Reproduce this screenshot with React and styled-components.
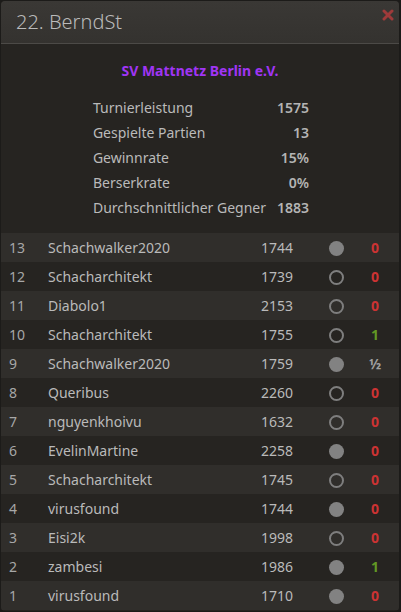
import React from "react";
import styled, { createGlobalStyle } from "styled-components";

const GlobalStyle = createGlobalStyle`
  html, body { margin: 0; padding: 0; background: #1c1b19; }
  body { font-family: "Noto Sans", "Open Sans", sans-serif; color: #bababa; }
  * { box-sizing: border-box; }
`;

const Panel = styled.div`
  margin: 1px 2px 1px 1px;
  width: 398px;
  height: 610px;
  background: #262421;
  border-radius: 4px;
  overflow: hidden;
  display: flex;
  flex-direction: column;
`;

const Header = styled.div`
  height: 43px;
  flex: none;
  background: linear-gradient(to bottom, #3a3835, #34322f);
  border-bottom: 1px solid #4c4a47;
  display: flex;
  align-items: center;
  justify-content: space-between;
  padding: 0 5px 2px 15px;
`;

const Title = styled.h2`
  margin: 0;
  font-size: 20px;
  font-weight: 300;
  color: #bababa;
  letter-spacing: 0;
`;

const Close = styled.button`
  border: 0;
  background: none;
  padding: 0;
  margin-top: -12px;
  width: 12px;
  height: 12px;
  display: flex;
  cursor: pointer;
`;

const Club = styled.div`
  text-align: center;
  font-size: 14px;
  font-weight: 700;
  color: #a035f5;
  line-height: 20px;
  margin-top: 17px;
`;

const Stats = styled.table`
  margin: 14px auto 13px;
  border-collapse: collapse;
  font-size: 14px;
  position: relative;
  left: 1px;
`;

const StatLabel = styled.th`
  text-align: left;
  font-weight: 400;
  height: 25px;
  padding: 0 11px 0 0;
  color: #bababa;
`;

const StatValue = styled.td`
  text-align: right;
  font-weight: 600;
  padding: 0;
  color: #b4b4b4;
`;

const Games = styled.table`
  width: 100%;
  border-collapse: collapse;
  font-size: 14px;
`;

const Row = styled.tr`
  height: 29px;
  background: ${(p) => (p.$odd ? "#302e2b" : "#262421")};
`;

const Num = styled.td`
  width: 47px;
  padding: 0 0 0 8px;
  color: #a7a7a7;
`;

const Name = styled.td`
  padding: 0;
  color: #bababa;
`;

const Rating = styled.td`
  width: 80px;
  padding: 0;
  text-align: right;
  color: #bababa;
`;

const ColorCell = styled.td`
  width: 70px;
  padding: 0;
`;

const Dot = styled.span`
  display: block;
  margin: 1px 0 0 36px;
  width: 15px;
  height: 15px;
  border-radius: 50%;
  background: ${(p) => (p.$white ? "transparent" : "#828282")};
  border: ${(p) => (p.$white ? "2px solid #7e7e7e" : "none")};
`;

const Result = styled.td`
  width: 36px;
  padding: 0 12px 0 0;
  text-align: center;
  font-weight: 700;
  color: ${(p) =>
    p.$r === "1" ? "#629924" : p.$r === "0" ? "#cc3333" : "#a0a0a0"};
`;

const stats = [
  ["Turnierleistung", "1575"],
  ["Gespielte Partien", "13"],
  ["Gewinnrate", "15%"],
  ["Berserkrate", "0%"],
  ["Durchschnittlicher Gegner", "1883"],
];

const games = [
  [13, "Schachwalker2020", 1744, "b", "0"],
  [12, "Schacharchitekt", 1739, "w", "0"],
  [11, "Diabolo1", 2153, "w", "0"],
  [10, "Schacharchitekt", 1755, "w", "1"],
  [9, "Schachwalker2020", 1759, "b", "½"],
  [8, "Queribus", 2260, "w", "0"],
  [7, "nguyenkhoivu", 1632, "w", "0"],
  [6, "EvelinMartine", 2258, "b", "0"],
  [5, "Schacharchitekt", 1745, "w", "0"],
  [4, "virusfound", 1744, "b", "0"],
  [3, "Eisi2k", 1998, "w", "0"],
  [2, "zambesi", 1986, "b", "1"],
  [1, "virusfound", 1710, "b", "0"],
];

export default function App() {
  return (
    <>
      <GlobalStyle />
      <Panel>
        <Header>
          <Title>22. BerndSt</Title>
          <Close aria-label="close">
            <svg width="12" height="12" viewBox="0 0 12 12">
              <path
                d="M2 2 L10 10 M10 2 L2 10"
                stroke="#9e3a3a"
                strokeWidth="3"
                strokeLinecap="round"
              />
            </svg>
          </Close>
        </Header>
        <Club>SV Mattnetz Berlin e.V.</Club>
        <Stats>
          <tbody>
            {stats.map(([l, v]) => (
              <tr key={l}>
                <StatLabel>{l}</StatLabel>
                <StatValue>{v}</StatValue>
              </tr>
            ))}
          </tbody>
        </Stats>
        <Games>
          <tbody>
            {games.map(([n, name, r, c, res], i) => (
              <Row key={n} $odd={i % 2 === 0}>
                <Num>{n}</Num>
                <Name>{name}</Name>
                <Rating>{r}</Rating>
                <ColorCell>
                  <Dot $white={c === "w"} />
                </ColorCell>
                <Result $r={res}>{res}</Result>
              </Row>
            ))}
          </tbody>
        </Games>
      </Panel>
    </>
  );
}
